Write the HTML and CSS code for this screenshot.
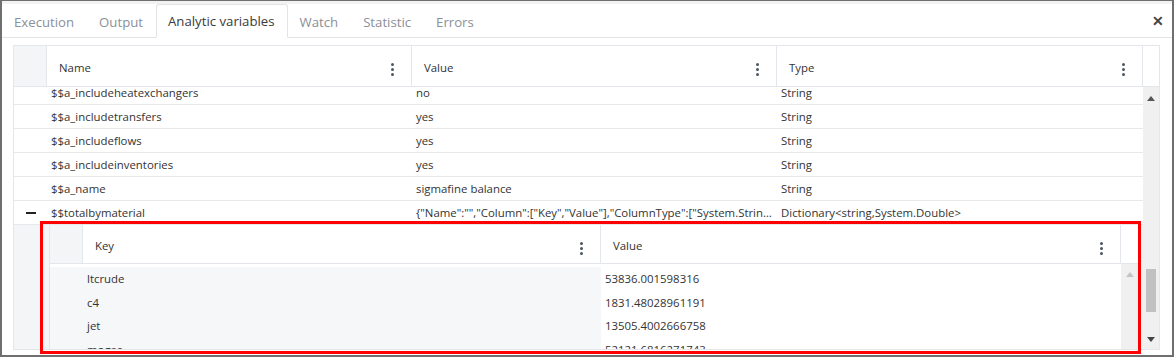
FILE: index.html
```html
<!DOCTYPE html>
<html lang="en">
<head>
  <meta charset="UTF-8">
  <title>Analytic variables</title>
  <link rel="stylesheet" href="styles.css">
</head>
<body>

  <div class="window">
    <div class="tabs">
      <div class="tab">Execution</div>
      <div class="tab">Output</div>
      <div class="tab active">Analytic variables</div>
      <div class="tab">Watch</div>
      <div class="tab">Statistic</div>
      <div class="tab">Errors</div>
      <div class="close">&#x2715;</div>
    </div>

    <div class="grid">
      <div class="grid-head">
        <div class="cell blank"></div>
        <div class="cell head">Name <span class="kebab"><i></i><i></i><i></i></span></div>
        <div class="cell head">Value <span class="kebab"><i></i><i></i><i></i></span></div>
        <div class="cell head">Type <span class="kebab"><i></i><i></i><i></i></span></div>
        <div class="cell head-scroll"></div>
      </div>

      <div class="grid-body">
        <div class="rows">
          <div class="row"><div class="cell blank"></div><div class="cell">$$a_includeheatexchangers</div><div class="cell">no</div><div class="cell">String</div></div>
          <div class="row"><div class="cell blank"></div><div class="cell">$$a_includetransfers</div><div class="cell">yes</div><div class="cell">String</div></div>
          <div class="row"><div class="cell blank"></div><div class="cell">$$a_includeflows</div><div class="cell">yes</div><div class="cell">String</div></div>
          <div class="row"><div class="cell blank"></div><div class="cell">$$a_includeinventories</div><div class="cell">yes</div><div class="cell">String</div></div>
          <div class="row"><div class="cell blank"></div><div class="cell">$$a_name</div><div class="cell">sigmafine balance</div><div class="cell">String</div></div>
          <div class="row"><div class="cell blank"><span class="minus"></span></div><div class="cell">$$totalbymaterial</div><div class="cell clip">{"Name":"","Column":["Key","Value"],"ColumnType":["System.String","System.Double"]}</div><div class="cell">Dictionary&lt;string,System.Double&gt;</div></div>

          <!-- grille imbriquée -->
          <div class="detail">
            <div class="sub-grid">
              <div class="sub-head">
                <div class="cell blank"></div>
                <div class="cell head">Key <span class="kebab"><i></i><i></i><i></i></span></div>
                <div class="cell head">Value <span class="kebab"><i></i><i></i><i></i></span></div>
                <div class="cell head-scroll"></div>
              </div>
              <div class="sub-body">
                <div class="sub-rows">
                  <div class="sub-row"><div class="cell blank"></div><div class="cell key">ltcrude</div><div class="cell">53836.001598316</div></div>
                  <div class="sub-row"><div class="cell blank"></div><div class="cell key">c4</div><div class="cell">1831.48028961191</div></div>
                  <div class="sub-row"><div class="cell blank"></div><div class="cell key">jet</div><div class="cell">13505.4002666758</div></div>
                  <div class="sub-row"><div class="cell blank"></div><div class="cell key">mogas</div><div class="cell">52121.6816271743</div></div>
                </div>
                <div class="scrollbar light">
                  <span class="arrow up"></span>
                </div>
              </div>
            </div>
          </div>
        </div>

        <div class="scrollbar">
          <span class="arrow up"></span>
          <span class="thumb"></span>
          <span class="arrow down"></span>
        </div>
      </div>
    </div>

    <div class="highlight"></div>
  </div>

</body>
</html>
```

FILE: styles.css
```css
body {
  margin: 0;
  background: #ffffff;
  font-family: "Open Sans", "Noto Sans", sans-serif;
  color: #333333;
}

.window {
  position: relative;
  width: 1174px;
  height: 357px;
  box-sizing: border-box;
  border: 2px solid #6f6f6f;
  border-top-width: 1px;
  background: #ffffff;
  overflow: hidden;
}

/* onglets */
.tabs {
  display: flex;
  align-items: flex-end;
  border-top: 3px solid #f2f2f2;
  border-bottom: 1px solid #e4e4e4;
  box-sizing: border-box;
  height: 37px;
}

.tab {
  padding: 0 12px 0 11px;
  height: 33px;
  line-height: 33px;
  font-size: 13.2px;
  color: #8a9099;
  box-sizing: border-box;
  margin-bottom: -1px;
  border: 1px solid transparent;
}

.tab.active {
  color: #3a3a3a;
  background: #ffffff;
  border-color: #e4e4e4;
  border-bottom-color: #ffffff;
  border-radius: 3px 3px 0 0;
  height: 34px;
}

.close {
  margin-left: auto;
  margin-right: 8px;
  align-self: center;
  font-size: 14px;
  font-weight: bold;
  color: #444444;
}

/* grille principale */
.grid {
  margin: 7px 12px 0 11px;
  border: 1px solid #e3e6ea;
  width: 1147px;
  box-sizing: border-box;
}

.grid-head {
  display: grid;
  grid-template-columns: 33px 365px 365px 366px 1fr;
  height: 40px;
  border-bottom: 1px solid #e3e6ea;
}

.cell {
  font-size: 11.4px;
  padding: 0 4px;
  white-space: nowrap;
  overflow: hidden;
  display: flex;
  align-items: center;
}

.cell.blank {
  background: #f4f5f7;
  padding: 0;
  justify-content: center;
}

.grid-head .cell.blank,
.sub-head .cell.blank {
  border-right: 1px solid #e3e6ea;
}

.cell.head {
  padding: 2px 0 0 12px;
  font-size: 11.4px;
  color: #333333;
  border-right: 1px solid #e3e6ea;
  position: relative;
}

.cell.head-scroll {
  background: #ffffff;
}

.kebab {
  position: absolute;
  right: 17px;
  top: 17px;
  display: flex;
  flex-direction: column;
  gap: 2px;
}

.kebab i {
  width: 3px;
  height: 3px;
  border-radius: 50%;
  background: #4b5563;
}

.grid-body {
  display: flex;
  height: 262px;
  overflow: hidden;
}

.rows {
  width: 1129px;
  margin-top: -6px;
}

.row {
  display: grid;
  grid-template-columns: 33px 365px 365px 366px;
  height: 24px;
  border-bottom: 1px solid #e6e8eb;
  box-sizing: border-box;
}

.row .cell.blank {
  background: #ffffff;
}

.row .cell.clip {
  text-overflow: ellipsis;
  display: block;
  line-height: 23px;
}

.minus {
  width: 10px;
  height: 2px;
  background: #222222;
}

/* grille imbriquée */
.detail {
  background: #f4f5f7;
  padding: 0 4px 0 35px;
  height: 140px;
}

.sub-grid {
  background: #ffffff;
  border-left: 1px solid #e3e6ea;
}

.sub-head {
  display: grid;
  grid-template-columns: 33px 518px 520px 1fr;
  height: 38px;
  border-bottom: 1px solid #e3e6ea;
}

.sub-body {
  display: flex;
  height: 100px;
}

.sub-rows {
  width: 1071px;
  padding-top: 3px;
}

.sub-row {
  display: grid;
  grid-template-columns: 33px 518px 520px;
  height: 23.6px;
}

.sub-row .cell.key,
.sub-row .cell.blank {
  background: #f6f7f9;
}

/* barres de défilement */
.scrollbar {
  position: relative;
  flex: 1;
  background: #f0f0f0;
}

.arrow {
  position: absolute;
  left: 50%;
  margin-left: -4px;
  width: 0;
  height: 0;
  border-left: 4px solid transparent;
  border-right: 4px solid transparent;
}

.arrow.up {
  top: 9px;
  border-bottom: 5px solid #555555;
}

.arrow.down {
  bottom: 7px;
  border-top: 5px solid #444444;
}

.scrollbar.light .arrow.up {
  top: 8px;
  border-bottom-color: #c4c4c4;
}

.thumb {
  position: absolute;
  left: 3px;
  right: 3px;
  top: 182px;
  height: 43px;
  background: #c1c1c1;
}

/* cadre rouge d'annotation */
.highlight {
  position: absolute;
  left: 38px;
  top: 220px;
  width: 1101px;
  height: 133px;
  box-sizing: border-box;
  border: 3px solid #ff0000;
}
```
